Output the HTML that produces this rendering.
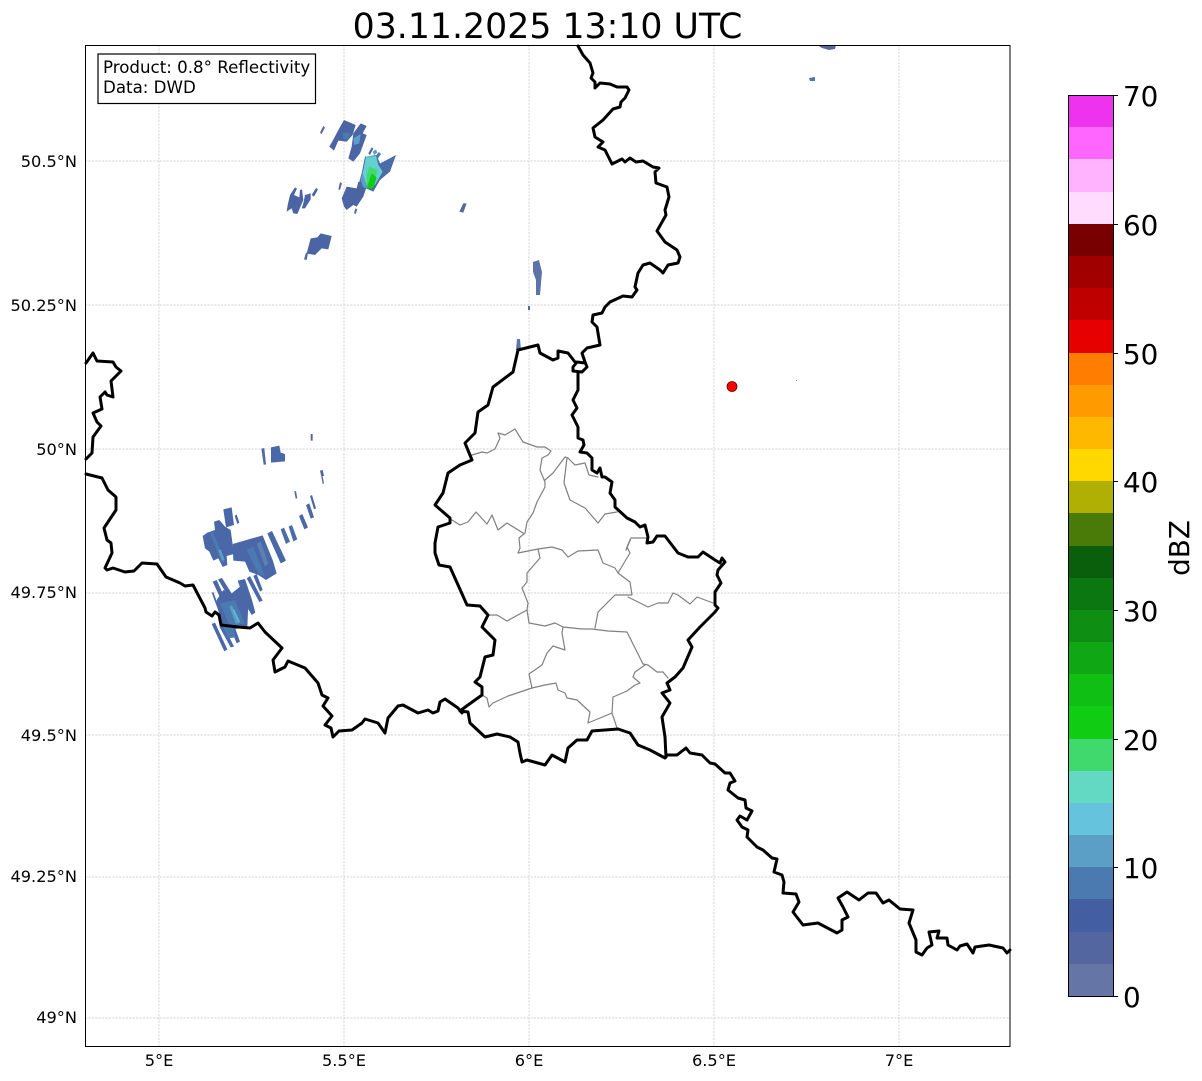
<!DOCTYPE html>
<html><head><meta charset="utf-8"><title>Radar</title>
<style>
html,body{margin:0;padding:0;background:#fff;}
svg{display:block;font-family:"DejaVu Sans",sans-serif;}
.b{fill:none;stroke:#000;stroke-width:3;stroke-linejoin:round;stroke-linecap:round;}
.g{fill:none;stroke:#808080;stroke-width:1.2;stroke-linejoin:round;stroke-linecap:round;}
.gr{stroke:#c6c6c6;stroke-width:.7;stroke-dasharray:2.2 1.2;}
.t{font-size:16.67px;fill:#000;}
.a{font-size:16.2px;fill:#000;}
.c{font-size:27.8px;fill:#000;}
</style></head><body>
<svg width="1202" height="1081" viewBox="0 0 1202 1081" xmlns="http://www.w3.org/2000/svg">
<rect width="1202" height="1081" fill="#fff"/>
<text x="547.5" y="38" text-anchor="middle" font-size="34.72" fill="#000">03.11.2025 13:10 UTC</text>

<g class="gr">
<line x1="159" y1="45" x2="159" y2="1046"/><line x1="344" y1="45" x2="344" y2="1046"/><line x1="529" y1="45" x2="529" y2="1046"/><line x1="714" y1="45" x2="714" y2="1046"/><line x1="899" y1="45" x2="899" y2="1046"/>
<line x1="85" y1="161" x2="1010" y2="161"/><line x1="85" y1="305" x2="1010" y2="305"/><line x1="85" y1="449" x2="1010" y2="449"/><line x1="85" y1="593" x2="1010" y2="593"/><line x1="85" y1="735" x2="1010" y2="735"/><line x1="85" y1="877" x2="1010" y2="877"/><line x1="85" y1="1018" x2="1010" y2="1018"/>
</g>

<!-- radar north cluster, in zoom coords -->
<g transform="translate(190,110) scale(.33333)">
<polygon fill="#4a64a4" points="418,110 432,85 445,60 462,30 497,45 488,75 470,95 445,92 432,122"/>
<polygon fill="#4a64a4" points="490,70 512,40 530,48 518,70 530,75 510,130 490,155 475,145 485,110"/>
<polygon fill="#55689f" points="390,68 400,48 405,52 395,72"/>
<polygon fill="#4b7ab0" points="458,68 480,68 476,88 460,88"/>
<polygon fill="#5b9ec6" points="490,85 512,72 508,100 492,105"/>
<polygon fill="#4a64a4" points="455,265 470,230 500,235 505,215 530,230 520,260 500,290 490,285 470,300 462,290"/>
<polygon fill="#4b6ba8" points="515,190 525,140 560,135 570,160 590,150 618,135 600,185 570,210 550,245 505,225"/>
<polygon fill="#4a64a4" points="535,130 545,112 550,115 540,135"/>
<polygon fill="#5b9ec6" points="548,125 558,118 562,128 552,135"/>
<polygon fill="#4b7ab0" points="556,140 566,126 573,132 562,148"/>
<polygon fill="#5b9ec6" points="512,210 520,180 570,190 545,235 520,232"/>
<polygon fill="#63d0d0" points="518,190 528,140 558,138 565,165 578,185 555,225 530,225"/>
<polygon fill="#3fd96d" points="530,195 538,170 562,180 552,225 530,225"/>
<polygon fill="#10cc13" points="530,235 545,190 560,202 550,235"/>
<polygon fill="#55689f" points="445,238 450,216 456,220 450,240"/>
<polygon fill="#4b6ba8" points="492,310 496,295 502,298 497,312"/>
<polygon fill="#4a64a4" points="293,285 300,255 315,232 321,235 312,255 328,262 330,240 336,238 340,270 322,312 310,310 305,295 290,305"/>
<polygon fill="#4a64a4" points="340,280 345,255 362,250 362,268 345,295 335,295"/>
<polygon fill="#4a64a4" points="365,255 378,234 384,238 372,260"/>
<polygon fill="#4a64a4" points="350,430 362,385 382,382 392,370 425,378 415,418 395,415 375,435 358,432"/>
<polygon fill="#5569a0" points="342,448 348,428 354,430 350,450"/>
<polygon fill="#55689f" points="808,305 820,280 830,280 820,308"/>
</g>

<!-- radar small -->
<polygon fill="#5b73a8" points="533,262 539,260 542,272 540,295 536,295 536,280 533,272"/>
<rect x="528" y="306" width="2" height="4" fill="#55689f"/>
<polygon fill="#5a76ad" points="516,350 517,339 520,339 521,350"/>
<polygon fill="#5569a0" points="817,45 836,45 835,49 829,50 822,48"/>
<polygon fill="#4f76a8" points="809,78 815,77 815,81 810,81"/>
<rect x="796" y="380" width="1" height="1" fill="#888"/>

<!-- radar west cluster, in zoom coords -->
<g transform="translate(190,430) scale(.33333)">
<g fill="#4a68a8">
<polygon fill="#5569a0" points="362,12 368,12 368,32 362,32"/>
<polygon points="243,52 268,47 272,68 285,72 285,94 243,98"/>
<polygon fill="#5569a0" points="214,56 223,54 228,104 221,104"/>
<polygon fill="#4a64a4" points="390,122 398,120 402,138 394,140"/>
<polygon fill="#5569a0" points="394,140 398,140 402,160 398,162"/>
<polygon fill="#5569a0" points="313,184 318,183 322,205 317,206"/>
<polygon points="360,198 366,195 378,235 372,238"/>
<polygon points="348,225 358,220 372,262 362,266"/>
<polygon points="327,258 337,252 354,292 343,298"/>
<polygon fill="#4d6daa" points="296,290 306,285 322,328 310,334"/>
<polygon fill="#4d6daa" points="272,298 282,293 300,335 288,342"/>
<polygon points="232,310 246,303 288,392 272,400"/>
<polygon points="128,342 218,316 248,390 260,430 228,450 205,435 178,425 165,395 130,392"/>
<polygon points="100,238 125,232 132,285 108,292"/>
<polygon points="134,258 140,253 148,278 142,282"/>
<polygon points="38,318 52,308 75,300 72,275 88,270 105,290 122,300 132,372 110,378 112,405 98,411 85,385 70,392 58,365 45,355"/>
<polygon points="170,445 180,438 218,512 208,516"/>
<polygon points="190,438 200,432 218,480 210,485"/>
<polygon points="68,455 80,450 112,520 100,524"/>
<polygon points="84,448 96,444 128,495 118,505"/>
<polygon points="65,488 70,486 90,540 85,542"/>
<polygon points="143,452 165,447 186,510 196,548 185,555 170,530"/>
<polygon points="80,510 100,480 125,490 150,470 175,520 172,590 130,598 92,585"/>
<polygon points="65,582 75,578 112,658 103,664"/>
<polygon points="88,590 100,585 132,650 122,652"/>
<polygon points="120,590 132,585 150,635 140,640"/>
<polygon fill="#4b7ab0" points="100,590 130,588 136,622 112,625"/>
</g>
<polygon fill="#4b7ab0" points="60,310 68,305 105,395 95,398"/>
<polygon fill="#4b7ab0" points="170,360 190,350 225,440 205,430"/>
<polygon fill="#5b80b5" points="200,340 212,335 235,400 225,410"/>
<polygon fill="#5b9ec6" points="85,360 92,358 104,390 96,392"/>
<polygon fill="#4b7ab0" points="90,520 135,510 165,580 120,590"/>
<polygon fill="#5b9ec6" points="118,530 126,526 148,578 138,582"/>
<polygon fill="#66b5d8" points="128,540 133,538 150,575 146,578"/>
</g>

<!-- cantons -->
<g>
<path class="g" d="M472,455 L482,452 487,453 495,449 500,438 498,433 505,435 515,429 523,442 537,447 545,447 551,451 548,455 542,458 540,470 545,482 545,487 537,502 533,513 527,522 525,533 519,538 520,548 518,553 538,549 552,547 562,550 568,557 578,551 598,550 603,563 615,568 618,573 630,553 627,547 630,540 626,550"/>
<path class="g" d="M545,480 L553,473 565,457 568,458 575,465 585,463 589,475 598,477"/>
<path class="g" d="M567,458 L564,483 570,500 585,508 598,523 605,514 617,512"/>
<path class="g" d="M452,520 L460,525 468,522 476,512 487,524 492,515 498,530 507,523 523,533"/>
<path class="g" d="M647,538 L631,538 626,550"/>
<path class="g" d="M538,549 L540,558 527,573 527,582 522,588 528,603 527,610 507,621 497,615 489,615"/>
<path class="g" d="M527,610 L529,623 545,626 555,623 563,627 582,629 592,629 608,631 627,632 635,648 643,664 648,665 657,672 663,672 668,678"/>
<path class="g" d="M618,573 L630,582 632,595 615,595 598,612 595,628"/>
<path class="g" d="M628,597 L648,607 658,603 668,603 673,593 678,595 690,604 697,597 713,603"/>
<path class="g" d="M563,627 L562,633 565,650 553,646 547,653 542,665 529,674 532,688 517,693 508,696 493,703 489,707 487,698 482,695"/>
<path class="g" d="M532,688 L545,685 556,683 558,690 565,693 567,698 577,700 590,712 588,723 612,713 617,728"/>
<path class="g" d="M612,713 L613,697 627,691 635,685 640,683 633,677 635,672 645,665"/>
</g>

<!-- thick borders -->
<path class="b" d="M578,46 L583,55 590,63 593,73 591,78 595,82 595,88 600,83 610,84 617,87 627,87 629,90 625,98 621,102 620,107 613,109 603,120 593,128 595,137 603,142 598,147 605,150 612,164 622,159 625,162 630,158 636,162 643,161 653,167 659,168 655,172 656,183 667,187 669,197 665,210 666,215 657,231 665,242 677,250 680,257 678,263 668,265 663,273 660,270 650,263 643,265 638,273 635,287 637,290 632,297 623,296 610,302 605,307 602,313 593,315 592,322 597,327 598,333 600,345 587,348 582,353 585,362 587,367 582,372 573,371 573,367 577,362 585,363 M578,373 L578,390 573,400 577,408 572,415 578,427 578,438 583,440 584,445 580,452 587,453 592,458 592,470 597,473 600,468 602,477 605,477 612,482 610,493 615,500 615,507 627,518 635,522 640,527 645,525 648,537 647,543 653,542 657,536 665,536 678,553 688,557 698,557 703,552 715,560 720,563 722,558 725,562 718,570 717,575 721,583 715,592 715,605 718,608 715,612 700,627 688,640 692,647 683,668 675,677 667,683 670,690 662,693 670,703 662,717 665,737 666,757"/>
<path class="b" d="M518,350 L538,345 540,353 553,360 558,358 558,351 568,353 575,362 M518,350 L513,372 493,387 488,405 478,412 475,433 465,443 472,460 460,465 448,473 443,493 435,505 450,518 450,523 438,527 435,543 435,553 439,565 450,567 467,605 480,606 488,615 482,627 495,640 493,655 485,657 480,677 475,682 482,687 482,695 468,705 460,711 468,712 470,723 485,737 497,734 510,737 518,742 520,753 522,762 527,760 545,765 552,755 565,762 568,748 577,740 587,740 592,731 618,729 630,733 638,745 650,750 665,758 667,755 677,755 686,748 690,753 702,755 710,763 715,764 725,773 730,773 735,781 730,783 728,790 738,798 745,800 746,808 752,811 747,820 740,816 737,820 742,827 748,830 747,837 757,847 763,850 772,858 777,859 774,872 782,875 784,882 783,893 796,894 799,902 793,912 803,925 818,923 837,933 842,930 842,920 848,917 843,907 838,898 847,892 859,900 868,893 876,893 883,903 889,900 900,909 913,910 909,923 916,940 916,952 922,955 927,948 932,945 929,932 939,931 937,938 947,938 948,945 957,950 960,946 967,944 973,953 975,947 989,945 1003,948 1007,953 1010,950"/>
<path class="b" d="M86,363 L93,353 97,361 113,362 116,367 121,371 111,381 113,397 107,395 105,392 100,397 102,409 93,413 97,422 101,426 93,437 92,453 86,459"/>
<path class="b" d="M86,474 L102,478 108,490 116,497 116,510 104,528 107,540 111,543 112,553 105,568 107,570 113,568 125,572 134,571 142,563 157,564 166,577 180,583 185,586 193,585 205,608 206,612 212,616 215,612 219,615 221,625 238,627 250,628 258,623 265,632 282,648 273,660 275,672 285,667 288,661 305,668 318,683 322,695 328,698 323,706 332,716 325,725 331,728 333,737 339,731 352,730 362,723 365,719 378,723 385,733 388,718 398,706 403,705 418,713 428,710 433,713 438,711 440,702 445,699 458,708 462,713"/>

<circle cx="732" cy="386.5" r="5" fill="#f00" stroke="#600" stroke-width=".8"/>

<!-- axes frame -->
<rect x="85.5" y="45.5" width="924.5" height="1001" fill="none" stroke="#000" stroke-width="1"/>

<!-- info box -->
<rect x="98" y="54" width="217.5" height="49.5" fill="#fff" stroke="#000" stroke-width="1.2"/>
<text class="t" x="103" y="73">Product: 0.8° Reflectivity</text>
<text class="t" x="103" y="93">Data: DWD</text>

<!-- axis labels -->
<g class="a" text-anchor="end">
<text x="77" y="167">50.5°N</text>
<text x="77" y="311">50.25°N</text>
<text x="77" y="455">50°N</text>
<text x="77" y="598">49.75°N</text>
<text x="77" y="741">49.5°N</text>
<text x="77" y="882">49.25°N</text>
<text x="77" y="1023">49°N</text>
</g>
<g class="a" text-anchor="middle">
<text x="159" y="1066">5°E</text>
<text x="344" y="1066">5.5°E</text>
<text x="529" y="1066">6°E</text>
<text x="714" y="1066">6.5°E</text>
<text x="899" y="1066">7°E</text>
</g>

<!-- colorbar -->
<g shape-rendering="crispEdges">
<rect x="1068" y="964" width="45" height="32" fill="#6475a6"/>
<rect x="1068" y="932" width="45" height="32" fill="#5366a0"/>
<rect x="1068" y="899" width="45" height="33" fill="#435fa1"/>
<rect x="1068" y="867" width="45" height="32" fill="#4b7ab0"/>
<rect x="1068" y="835" width="45" height="32" fill="#5b9ec6"/>
<rect x="1068" y="803" width="45" height="32" fill="#66c3dd"/>
<rect x="1068" y="771" width="45" height="32" fill="#63d9c4"/>
<rect x="1068" y="739" width="45" height="32" fill="#3fd96d"/>
<rect x="1068" y="706" width="45" height="33" fill="#10cc13"/>
<rect x="1068" y="674" width="45" height="32" fill="#10bf14"/>
<rect x="1068" y="642" width="45" height="32" fill="#10a714"/>
<rect x="1068" y="610" width="45" height="32" fill="#0e8e12"/>
<rect x="1068" y="578" width="45" height="32" fill="#0b7710"/>
<rect x="1068" y="546" width="45" height="32" fill="#095f0b"/>
<rect x="1068" y="513" width="45" height="33" fill="#4a7a08"/>
<rect x="1068" y="481" width="45" height="32" fill="#b0b004"/>
<rect x="1068" y="449" width="45" height="32" fill="#ffd800"/>
<rect x="1068" y="417" width="45" height="32" fill="#ffb800"/>
<rect x="1068" y="385" width="45" height="32" fill="#ff9a00"/>
<rect x="1068" y="353" width="45" height="32" fill="#ff7d00"/>
<rect x="1068" y="320" width="45" height="33" fill="#e60000"/>
<rect x="1068" y="288" width="45" height="32" fill="#c00000"/>
<rect x="1068" y="256" width="45" height="32" fill="#a00000"/>
<rect x="1068" y="224" width="45" height="32" fill="#780000"/>
<rect x="1068" y="192" width="45" height="32" fill="#ffdcff"/>
<rect x="1068" y="159" width="45" height="33" fill="#ffb3ff"/>
<rect x="1068" y="127" width="45" height="32" fill="#ff66ff"/>
<rect x="1068" y="95" width="45" height="32" fill="#ee33ee"/>
</g>
<rect x="1068.5" y="95.5" width="45" height="901" fill="none" stroke="#000" stroke-width="1"/>
<g stroke="#000" stroke-width="1">
<line x1="1113" y1="95.5" x2="1118" y2="95.5"/><line x1="1113" y1="224.5" x2="1118" y2="224.5"/><line x1="1113" y1="353.5" x2="1118" y2="353.5"/><line x1="1113" y1="481.5" x2="1118" y2="481.5"/><line x1="1113" y1="610.5" x2="1118" y2="610.5"/><line x1="1113" y1="739.5" x2="1118" y2="739.5"/><line x1="1113" y1="867.5" x2="1118" y2="867.5"/><line x1="1113" y1="996.5" x2="1118" y2="996.5"/>
</g>
<g class="c">
<text x="1123" y="106">70</text>
<text x="1123" y="235">60</text>
<text x="1123" y="364">50</text>
<text x="1123" y="492">40</text>
<text x="1123" y="621">30</text>
<text x="1123" y="750">20</text>
<text x="1123" y="878">10</text>
<text x="1123" y="1007">0</text>
</g>
<text class="c" transform="translate(1189,548) rotate(-90)" text-anchor="middle">dBZ</text>
</svg>
</body></html>
